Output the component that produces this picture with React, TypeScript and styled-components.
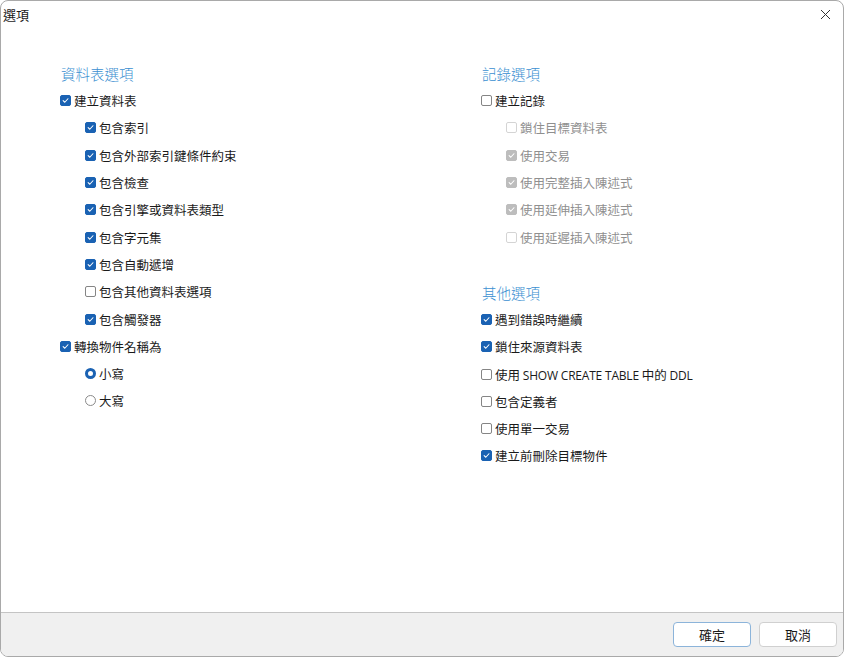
import styled, { createGlobalStyle } from "styled-components";

const GlobalStyle = createGlobalStyle`
  html, body {
    margin: 0;
    padding: 0;
    background: #ffffff;
  }
  body {
    font-family: "Noto Sans CJK TC", "Noto Sans", sans-serif;
    font-size: 13px;
    color: #1a1a1a;
  }
`;

const Window = styled.div`
  width: 844px;
  height: 657px;
  box-sizing: border-box;
  border: 1px solid #a9a9a9;
  border-radius: 8px;
  overflow: hidden;
  display: flex;
  flex-direction: column;
  background: #ffffff;
`;

const TitleBar = styled.div`
  height: 26px;
  display: flex;
  align-items: center;
  justify-content: space-between;
  padding: 0 10px 0 2px;
  flex-shrink: 0;
`;

const Title = styled.span`
  font-size: 13px;
  color: #1a1a1a;
`;

const CloseButton = styled.span`
  width: 16px;
  height: 16px;
  display: flex;
  align-items: center;
  justify-content: center;
  color: #333;
`;

const Main = styled.div`
  flex: 1;
  display: grid;
  grid-template-columns: 421px 1fr;
  padding: 37px 0 0 59px;
`;

const Column = styled.div`
  display: flex;
  flex-direction: column;
`;

const SectionTitle = styled.div<{ $spaced?: boolean }>`
  height: 20px;
  line-height: 20px;
  font-size: 14.5px;
  font-weight: 300;
  color: #3b8fd1;
  margin-bottom: 3px;
  margin-top: ${(p) => (p.$spaced ? "32px" : "0")};
  padding-left: 1px;
`;

const Row = styled.label<{ $indent?: boolean; $disabled?: boolean }>`
  height: 27.3px;
  display: flex;
  align-items: center;
  gap: 3px;
  padding-left: ${(p) => (p.$indent ? "25px" : "0")};
  color: ${(p) => (p.$disabled ? "#8f8f8f" : "#1a1a1a")};
  font-size: 12.5px;
  white-space: nowrap;
`;

const Latin = styled.span`
  font-family: "Open Sans", "Noto Sans", sans-serif;
  font-size: 12px;
  letter-spacing: -0.2px;
`;

const Box = styled.span<{ $checked?: boolean; $disabled?: boolean }>`
  width: 11px;
  height: 11px;
  box-sizing: border-box;
  border-radius: 2px;
  display: flex;
  align-items: center;
  justify-content: center;
  flex-shrink: 0;
  background: ${(p) =>
    p.$checked ? (p.$disabled ? "#bdbdbd" : "#1a62b3") : "#ffffff"};
  border: 1px solid
    ${(p) =>
      p.$checked
        ? p.$disabled
          ? "#bdbdbd"
          : "#1a62b3"
        : p.$disabled
        ? "#d4d4d4"
        : "#858585"};
`;

const Radio = styled.span<{ $checked?: boolean }>`
  width: 11px;
  height: 11px;
  box-sizing: border-box;
  border-radius: 50%;
  flex-shrink: 0;
  background: #ffffff;
  border: ${(p) => (p.$checked ? "3px solid #1a62b3" : "1px solid #8a8a8a")};
`;

const Footer = styled.div`
  height: 43px;
  flex-shrink: 0;
  background: #f0f0f0;
  border-top: 1px solid #c4c4c4;
  display: flex;
  align-items: center;
  justify-content: flex-end;
  gap: 8px;
  padding: 0 6px 0 0;
`;

const Button = styled.button<{ $primary?: boolean }>`
  width: 78px;
  height: 25px;
  background: #ffffff;
  border: 1px solid ${(p) => (p.$primary ? "#8cb4da" : "#d0d0d0")};
  border-radius: 4px;
  font-family: "Noto Sans CJK TC", "Noto Sans", sans-serif;
  font-size: 13px;
  color: #1a1a1a;
  padding: 0;
`;

type Item = {
  label: string;
  checked?: boolean;
  indent?: boolean;
  disabled?: boolean;
  radio?: boolean;
};

const tableOptions: Item[] = [
  { label: "建立資料表", checked: true },
  { label: "包含索引", checked: true, indent: true },
  { label: "包含外部索引鍵條件約束", checked: true, indent: true },
  { label: "包含檢查", checked: true, indent: true },
  { label: "包含引擎或資料表類型", checked: true, indent: true },
  { label: "包含字元集", checked: true, indent: true },
  { label: "包含自動遞增", checked: true, indent: true },
  { label: "包含其他資料表選項", indent: true },
  { label: "包含觸發器", checked: true, indent: true },
  { label: "轉換物件名稱為", checked: true },
  { label: "小寫", checked: true, indent: true, radio: true },
  { label: "大寫", indent: true, radio: true },
];

const recordOptions: Item[] = [
  { label: "建立記錄" },
  { label: "鎖住目標資料表", indent: true, disabled: true },
  { label: "使用交易", indent: true, disabled: true, checked: true },
  { label: "使用完整插入陳述式", indent: true, disabled: true, checked: true },
  { label: "使用延伸插入陳述式", indent: true, disabled: true, checked: true },
  { label: "使用延遲插入陳述式", indent: true, disabled: true },
];

const otherOptions: Item[] = [
  { label: "遇到錯誤時繼續", checked: true },
  { label: "鎖住來源資料表", checked: true },
  { label: "使用 SHOW CREATE TABLE 中的 DDL" },
  { label: "包含定義者" },
  { label: "使用單一交易" },
  { label: "建立前刪除目標物件", checked: true },
];

const Check = () => (
  <svg width="7" height="7" viewBox="0 0 8 8">
    <path
      d="M1.3 4.2 L3.2 6 L6.8 2"
      fill="none"
      stroke="#ffffff"
      strokeWidth="1.2"
      strokeLinecap="round"
      strokeLinejoin="round"
    />
  </svg>
);

// split runs of ASCII so Latin words get a narrower face
const renderLabel = (label: string) =>
  label.split(/([A-Za-z][A-Za-z ]*[A-Za-z])/).map((part, i) =>
    /[A-Za-z]/.test(part) ? <Latin key={i}>{part}</Latin> : part
  );

const Option = ({ item }: { item: Item }) => (
  <Row $indent={item.indent} $disabled={item.disabled}>
    {item.radio ? (
      <Radio $checked={item.checked} />
    ) : (
      <Box $checked={item.checked} $disabled={item.disabled}>
        {item.checked && <Check />}
      </Box>
    )}
    <span>{renderLabel(item.label)}</span>
  </Row>
);

export default function App() {
  return (
    <>
      <GlobalStyle />
      <Window>
        <TitleBar>
          <Title>選項</Title>
          <CloseButton>
            <svg width="11" height="11" viewBox="0 0 11 11">
              <path
                d="M1 1 L10 10 M10 1 L1 10"
                stroke="#333"
                strokeWidth="1"
                fill="none"
              />
            </svg>
          </CloseButton>
        </TitleBar>
        <Main>
          <Column>
            <SectionTitle>資料表選項</SectionTitle>
            {tableOptions.map((item) => (
              <Option key={item.label} item={item} />
            ))}
          </Column>
          <Column>
            <SectionTitle>記錄選項</SectionTitle>
            {recordOptions.map((item) => (
              <Option key={item.label} item={item} />
            ))}
            <SectionTitle $spaced>其他選項</SectionTitle>
            {otherOptions.map((item) => (
              <Option key={item.label} item={item} />
            ))}
          </Column>
        </Main>
        <Footer>
          <Button $primary>確定</Button>
          <Button>取消</Button>
        </Footer>
      </Window>
    </>
  );
}
